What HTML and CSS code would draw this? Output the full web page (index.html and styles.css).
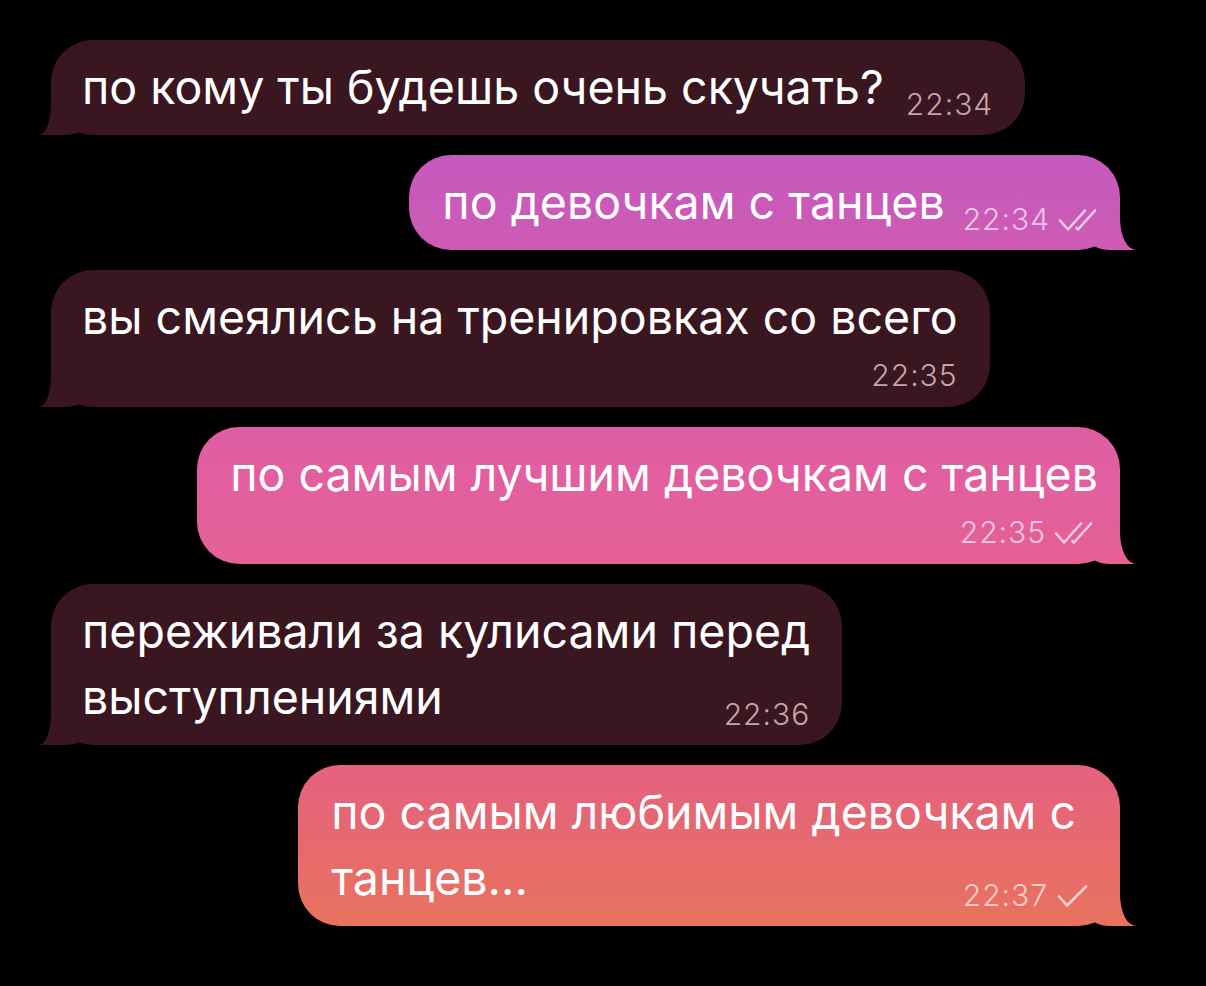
FILE: index.html
```html
<!DOCTYPE html>
<html lang="ru">
<head>
<meta charset="utf-8">
<title>Чат</title>
<link rel="stylesheet" href="styles.css">
</head>
<body>
<main class="chat">
  <div class="bubble in">
    <p class="text">по кому ты будешь очень скучать?</p>
    <span class="meta"><time>22:34</time></span>
  </div>

  <div class="bubble out">
    <p class="text">по девочкам с танцев</p>
    <span class="meta"><time>22:34</time>
      <svg class="ticks" viewBox="0 0 40 24" width="40" height="24"><path d="M2 12.5 L10 21.5 L27 2.5"/><path d="M18.5 20 L20 21.5 L37 2.5"/></svg>
    </span>
  </div>

  <div class="bubble in meta-below">
    <p class="text">вы смеялись на тренировках со всего</p>
    <span class="meta"><time>22:35</time></span>
  </div>

  <div class="bubble out meta-below">
    <p class="text">по самым лучшим девочкам с танцев</p>
    <span class="meta"><time>22:35</time>
      <svg class="ticks" viewBox="0 0 40 24" width="40" height="24"><path d="M2 12.5 L10 21.5 L27 2.5"/><path d="M18.5 20 L20 21.5 L37 2.5"/></svg>
    </span>
  </div>

  <div class="bubble in">
    <p class="text">переживали за кулисами перед<br>выступлениями</p>
    <span class="meta"><time>22:36</time></span>
  </div>

  <div class="bubble out loose">
    <p class="text">по самым любимым девочкам с<br>танцев...</p>
    <span class="meta"><time>22:37</time>
      <svg class="ticks" viewBox="0 0 40 24" width="40" height="24"><path d="M3 12.5 L11 21.5 L30 2.5"/></svg>
    </span>
  </div>
</main>
</body>
</html>
```
FILE: styles.css
```css
html, body {
  margin: 0;
  background: #000;
}

body {
  font-family: Inter, "Noto Sans", sans-serif;
  color: #fff;
}

.chat {
  display: flex;
  flex-direction: column;
  gap: 20px;
  padding: 40px 86px 40px 51px;
}

.bubble {
  position: relative;
  display: flow-root;
  max-width: 990px;
  box-sizing: border-box;
  padding: 14px 32px 15px 31px;
  border-radius: 42px;
}

.bubble .text {
  display: inline;
  margin: 0;
  font-size: 46.5px;
  line-height: 66px;
}

/* timestamp sits at the end of the last line, a little below the baseline */
.meta {
  position: relative;
  z-index: 1;
  float: right;
  display: flex;
  align-items: baseline;
  gap: 5px;
  margin: 33px 0 -4px 22px;
  font-size: 30px;
  font-weight: 300;
  line-height: 34px;
  letter-spacing: 1px;
}

/* when the text fills the row, the timestamp gets its own short row */
.bubble.meta-below .meta {
  float: none;
  justify-content: flex-end;
  margin: 8px 0 0;
}
.bubble.meta-below .text {
  display: block;
}

.ticks {
  fill: none;
  stroke: currentColor;
  stroke-width: 2.6;
  stroke-linecap: round;
  stroke-linejoin: round;
  align-self: flex-end;
  margin-bottom: 4px;
}

/* incoming */
.bubble.in {
  align-self: flex-start;
  background: #3a1620;
}
.bubble.in .meta {
  color: #c7a5ae;
}

/* outgoing: one gradient spread over the whole screen */
.bubble.out {
  align-self: flex-end;
  padding-left: 33px;
  padding-right: 22px;
  background: linear-gradient(180deg,
    #b957cc 0px,
    #c95ab9 200px,
    #d85ca9 350px,
    #e35f9e 490px,
    #e5618c 640px,
    #e5637c 780px,
    #e76c69 870px,
    #ea745c 940px) fixed;
}
.bubble.out .meta {
  gap: 8px;
  margin-left: 18px;
  color: rgba(255, 255, 255, 0.68);
}
.bubble.out.meta-below .meta {
  margin: 8px 4px 0 0;
}
.bubble.out.loose {
  padding-right: 44px;
}
.bubble.out.loose .meta {
  margin-right: -20px;
}

/* tails */
.bubble::before,
.bubble::after {
  content: "";
  position: absolute;
  bottom: 0;
}

.bubble.in::before {
  left: -12px;
  width: 46px;
  height: 40px;
  background: inherit;
  border-bottom-right-radius: 20px 10px;
}
.bubble.in::after {
  right: 100%;
  width: 30px;
  height: 44px;
  background: #000;
  border-bottom-right-radius: 12px 32px;
}

.bubble.out::before {
  right: -16px;
  width: 46px;
  height: 40px;
  background: inherit;
  border-bottom-left-radius: 20px 10px;
}
.bubble.out::after {
  left: 100%;
  width: 30px;
  height: 44px;
  background: #000;
  border-bottom-left-radius: 16px 32px;
}
```
